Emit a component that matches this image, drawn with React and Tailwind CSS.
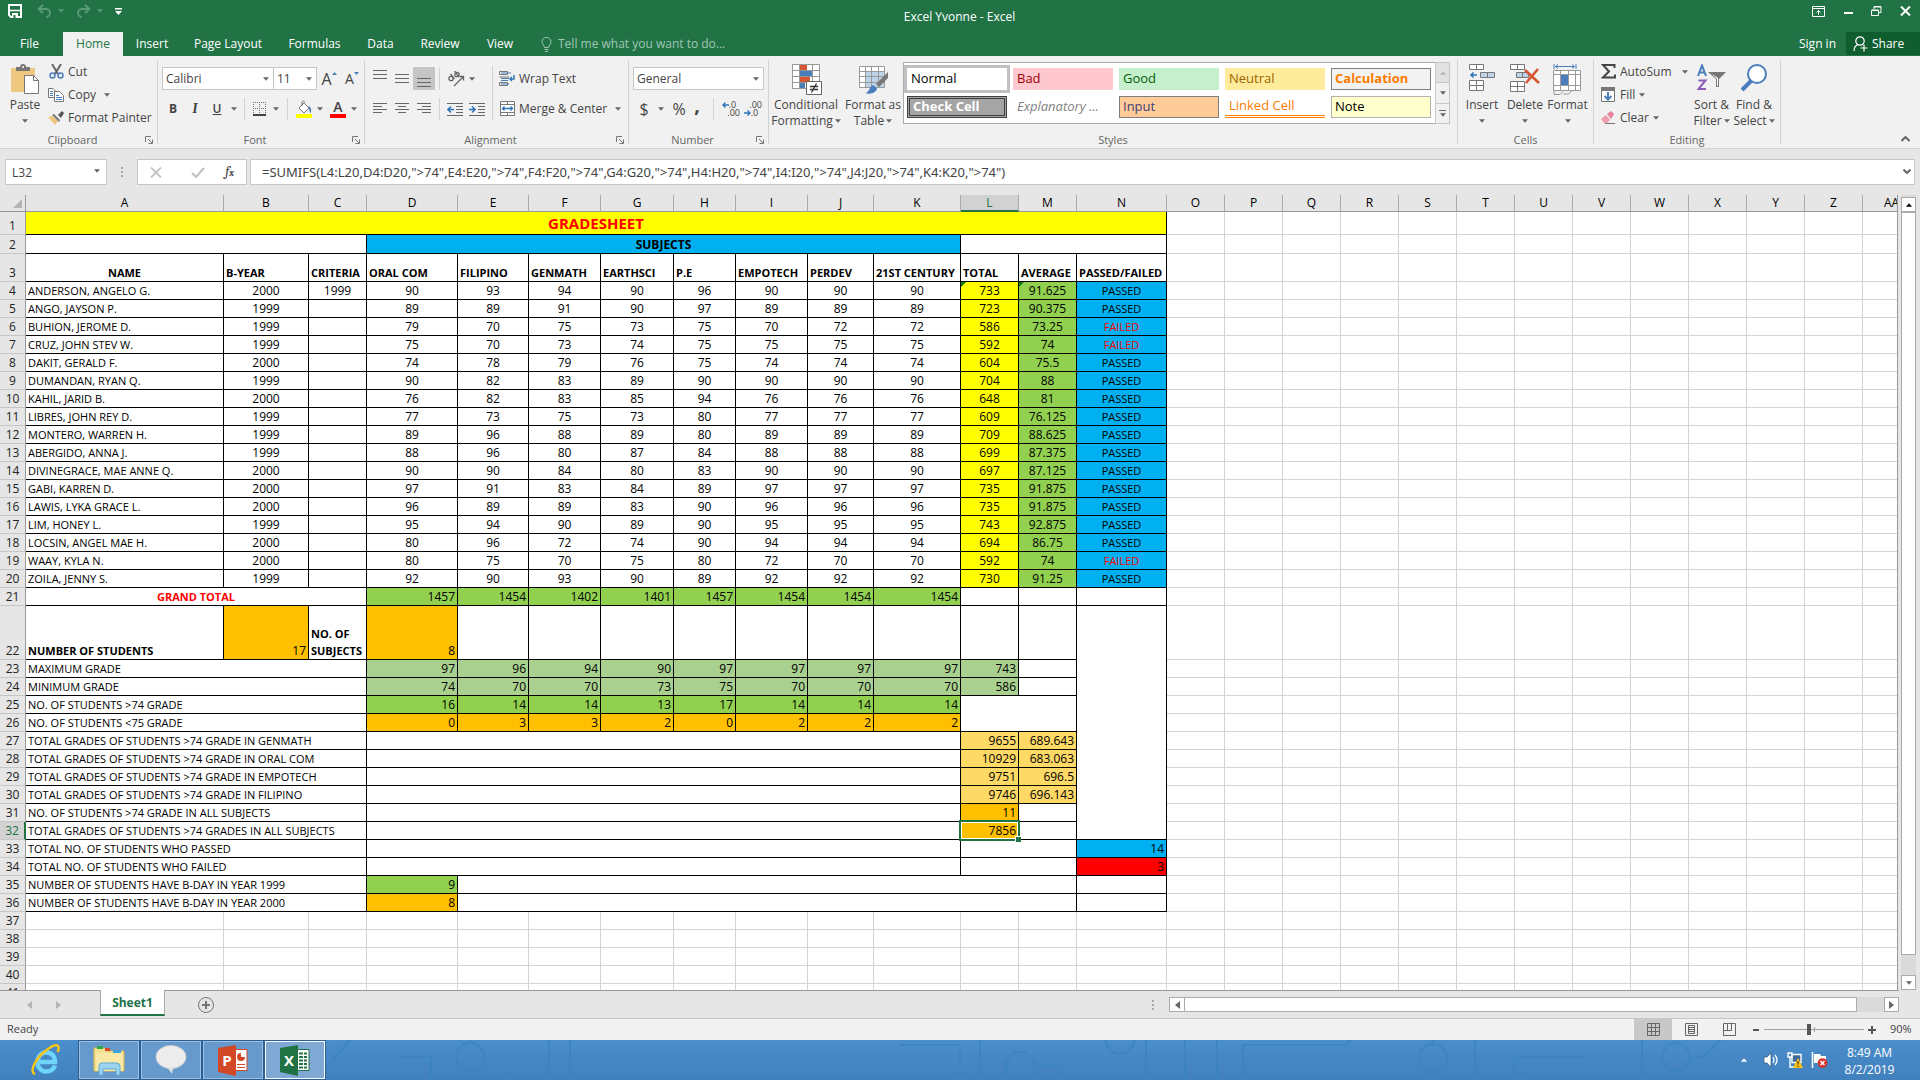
import React from 'react';
import clsx from 'clsx';

const YELLOW = 'bg-[#ffff00]';
const BLUE = 'bg-[#00b0f0]';
const GREEN = 'bg-[#92d050]';
const SAGE = 'bg-[#a9d08e]';
const ORANGE = 'bg-[#ffc000]';
const SAND = 'bg-[#ffd966]';

const columns = [
    ['A', 198], ['B', 85], ['C', 58], ['D', 91], ['E', 71], ['F', 72], ['G', 73], ['H', 62], ['I', 72], ['J', 66],
    ['K', 87], ['L', 58], ['M', 58], ['N', 90], ['O', 58], ['P', 58], ['Q', 58], ['R', 58], ['S', 58], ['T', 58],
    ['U', 58], ['V', 58], ['W', 58], ['X', 58], ['Y', 58], ['Z', 58], ['AA', 58],
];

const students = [
    ['ANDERSON, ANGELO G.', 2000, 1999, 90, 93, 94, 90, 96, 90, 90, 90, 733, 91.625, 'PASSED'],
    ['ANGO, JAYSON P.', 1999, '', 89, 89, 91, 90, 97, 89, 89, 89, 723, 90.375, 'PASSED'],
    ['BUHION, JEROME D.', 1999, '', 79, 70, 75, 73, 75, 70, 72, 72, 586, 73.25, 'FAILED'],
    ['CRUZ, JOHN STEV W.', 1999, '', 75, 70, 73, 74, 75, 75, 75, 75, 592, 74, 'FAILED'],
    ['DAKIT, GERALD F.', 2000, '', 74, 78, 79, 76, 75, 74, 74, 74, 604, 75.5, 'PASSED'],
    ['DUMANDAN, RYAN Q.', 1999, '', 90, 82, 83, 89, 90, 90, 90, 90, 704, 88, 'PASSED'],
    ['KAHIL, JARID B.', 2000, '', 76, 82, 83, 85, 94, 76, 76, 76, 648, 81, 'PASSED'],
    ['LIBRES, JOHN REY D.', 1999, '', 77, 73, 75, 73, 80, 77, 77, 77, 609, 76.125, 'PASSED'],
    ['MONTERO, WARREN H.', 1999, '', 89, 96, 88, 89, 80, 89, 89, 89, 709, 88.625, 'PASSED'],
    ['ABERGIDO, ANNA J.', 1999, '', 88, 96, 80, 87, 84, 88, 88, 88, 699, 87.375, 'PASSED'],
    ['DIVINEGRACE, MAE ANNE Q.', 2000, '', 90, 90, 84, 80, 83, 90, 90, 90, 697, 87.125, 'PASSED'],
    ['GABI, KARREN D.', 2000, '', 97, 91, 83, 84, 89, 97, 97, 97, 735, 91.875, 'PASSED'],
    ['LAWIS, LYKA GRACE L.', 2000, '', 96, 89, 89, 83, 90, 96, 96, 96, 735, 91.875, 'PASSED'],
    ['LIM, HONEY L.', 1999, '', 95, 94, 90, 89, 90, 95, 95, 95, 743, 92.875, 'PASSED'],
    ['LOCSIN, ANGEL MAE H.', 2000, '', 80, 96, 72, 74, 90, 94, 94, 94, 694, 86.75, 'PASSED'],
    ['WAAY, KYLA N.', 2000, '', 80, 75, 70, 75, 80, 72, 70, 70, 592, 74, 'FAILED'],
    ['ZOILA, JENNY S.', 1999, '', 92, 90, 93, 90, 89, 92, 92, 92, 730, 91.25, 'PASSED'],
];

const label = (t, span = 1, cls = '') => ({ t, span, cls: `text-left text-[11px] ${cls}` });
const head = (t, cls = 'text-left') => ({ t, cls: `text-[11px] font-bold ${cls}` });
const num = (t, cls = '') => ({ t, cls: `text-right text-xs ${cls}` });
const mid = (t, cls = '') => ({ t, cls: `text-center text-xs ${cls}` });
const blank = (span = 1, rows = 1) => ({ t: '', span, rows, cls: '' });
const nums = (list, cls) => list.map((t) => num(t, cls));
const blanks = (n) => Array.from({ length: n }, () => blank());

const sheetRows = [
    { h: 23, cells: [{ t: 'GRADESHEET', span: 14, cls: `text-center align-middle text-[15px] font-bold text-[#ff0000] ${YELLOW}` }] },
    { h: 19, cells: [blank(3), { t: 'SUBJECTS', span: 8, cls: `text-center text-xs font-bold ${BLUE}` }, blank(3)] },
    {
        h: 28,
        cells: [
            head('NAME', 'text-center'),
            ...['B-YEAR', 'CRITERIA', 'ORAL COM', 'FILIPINO', 'GENMATH', 'EARTHSCI', 'P.E', 'EMPOTECH', 'PERDEV', '21ST CENTURY', 'TOTAL', 'AVERAGE', 'PASSED/FAILED'].map((t) => head(t)),
        ],
    },
    ...students.map((s, r) => ({
        h: 18,
        cells: s.map((v, i) => {
            if (i === 0) return label(v);
            if (i === 11) return { ...mid(v, YELLOW), flag: r === 0 };
            if (i === 12) return { ...mid(v, GREEN), flag: r === 0 };
            if (i === 13) return { t: v, cls: clsx('text-center text-[11px]', BLUE, v === 'FAILED' && 'text-[#ff0000]') };
            return mid(v);
        }),
    })),
    { h: 18, cells: [{ t: 'GRAND TOTAL', span: 3, cls: 'text-center text-[11px] font-bold text-[#ff0000]' }, ...nums([1457, 1454, 1402, 1401, 1457, 1454, 1454, 1454], GREEN), ...blanks(3)] },
    { h: 54, cells: [head('NUMBER OF STUDENTS'), num(17, ORANGE), { t: 'NO. OF SUBJECTS', cls: 'text-left text-[11px] font-bold whitespace-normal' }, num(8, ORANGE), ...blanks(9), blank(1, 11)] },
    { h: 18, cells: [label('MAXIMUM GRADE', 3), ...nums([97, 96, 94, 90, 97, 97, 97, 97, 743], SAGE), blank()] },
    { h: 18, cells: [label('MINIMUM GRADE', 3), ...nums([74, 70, 70, 73, 75, 70, 70, 70, 586], SAGE), blank()] },
    { h: 18, cells: [label('NO. OF STUDENTS >74 GRADE', 3), ...nums([16, 14, 14, 13, 17, 14, 14, 14], GREEN), blank(2, 2)] },
    { h: 18, cells: [label('NO. OF STUDENTS <75 GRADE', 3), ...nums([0, 3, 3, 2, 0, 2, 2, 2], ORANGE)] },
    { h: 18, cells: [label('TOTAL GRADES OF STUDENTS >74 GRADE IN GENMATH', 3), blank(8), num(9655, SAND), num(689.643, SAND)] },
    { h: 18, cells: [label('TOTAL GRADES OF STUDENTS >74 GRADE IN ORAL COM', 3), blank(8), num(10929, SAND), num(683.063, SAND)] },
    { h: 18, cells: [label('TOTAL GRADES OF STUDENTS >74 GRADE IN EMPOTECH', 3), blank(8), num(9751, SAND), num(696.5, SAND)] },
    { h: 18, cells: [label('TOTAL GRADES OF STUDENTS >74 GRADE IN FILIPINO', 3), blank(8), num(9746, SAND), num(696.143, SAND)] },
    { h: 18, cells: [label('NO. OF STUDENTS >74 GRADE IN ALL SUBJECTS', 3), blank(8), num(11, ORANGE), blank()] },
    { h: 18, cells: [label('TOTAL GRADES OF STUDENTS >74 GRADES IN ALL SUBJECTS', 3), blank(8), { ...num(7856, ORANGE), selected: true }, blank()] },
    { h: 18, cells: [label('TOTAL NO. OF STUDENTS WHO PASSED', 3), blank(8), blank(2), num(14, BLUE)] },
    { h: 18, cells: [label('TOTAL NO. OF STUDENTS WHO FAILED', 3), blank(8), blank(2), num(3, 'bg-[#ff0000]')] },
    { h: 18, cells: [label('NUMBER OF STUDENTS HAVE B-DAY IN YEAR 1999', 3), num(9, GREEN), blank(9), blank()] },
    { h: 18, cells: [label('NUMBER OF STUDENTS HAVE B-DAY IN YEAR 2000', 3), num(8, ORANGE), blank(9), blank()] },
    ...Array.from({ length: 5 }, () => ({ h: 18, cells: [] })),
];

const Caret = ({ className = 'text-[#666]' }) => (
    <svg width="6" height="4" viewBox="0 0 7 4" className={clsx('shrink-0', className)} fill="currentColor">
        <path d="M0 0h7L3.500 4z" />
    </svg>
);

const Svg = ({ w, h = w, children, ...rest }) => (
    <svg width={w} height={h} viewBox={`0 0 ${w} ${h}`} fill="none" className="shrink-0" {...rest}>
        {children}
    </svg>
);

const IconButton = ({ name, className, children }) => (
    <button aria-label={name} className={clsx('flex h-full shrink-0 items-center justify-center', className)}>
        {children}
    </button>
);

/* ---------- title bar ---------- */

const TitleBar = () => (
    <div className="flex h-8 items-start justify-between text-white">
        <div className="flex h-[22px] flex-1 items-center pl-2">
            <button aria-label="Save">
                <Svg w={14}>
                    <path d="M1 1h12v12H3l-2-2z" stroke="#fff" strokeWidth="2" />
                    <path d="M1 6.500h12" stroke="#fff" strokeWidth="1.500" />
                    <path d="M4 9h6v5H4z" fill="#fff" />
                    <path d="M5.500 11h2v3h-2z" fill="#217346" />
                </Svg>
            </button>
            <button aria-label="Undo" className="ml-[15px] flex items-center gap-1.5 text-[#5a9877]">
                <Svg w={15} h={14}>
                    <path d="M6 1L1.500 5 6 9M2 5h7a4 4 0 0 1 0 8" stroke="currentColor" strokeWidth="2" />
                </Svg>
                <Caret className="text-[#5a9877]" />
            </button>
            <button aria-label="Redo" className="ml-3 flex items-center gap-1.5 text-[#5a9877]">
                <Svg w={15} h={14}>
                    <path d="M9 1l4.500 4L9 9M13 5H6a4 4 0 0 0 0 8" stroke="currentColor" strokeWidth="2" />
                </Svg>
                <Caret className="text-[#5a9877]" />
            </button>
            <button aria-label="Customize" className="ml-3">
                <Svg w={7} h={7}>
                    <path d="M0 0h7v1.500H0zM0 3h7L3.500 7z" fill="#fff" />
                </Svg>
            </button>
        </div>
        <h1 className="pt-2 text-xs leading-[18px]">Excel Yvonne - Excel</h1>
        <div className="flex h-[22px] flex-1 items-center justify-end gap-[18px] pr-[9px]">
            <button aria-label="Ribbon options">
                <Svg w={13} h={11} stroke="#fff">
                    <path d="M.5.5h12v10H.5zM.5 2.500h12M6.500 9V4.500M4.500 6.500l2-2 2 2" />
                </Svg>
            </button>
            <button aria-label="Minimize">
                <Svg w={10} h={10}>
                    <path d="M1 6h9v2H1z" fill="#fff" />
                </Svg>
            </button>
            <button aria-label="Restore">
                <Svg w={11} h={10} stroke="#fff">
                    <path d="M.5 4.500h7v5h-7zM.5 4h7M3 3V.5h7v6H8M3 1h7" />
                </Svg>
            </button>
            <button aria-label="Close">
                <Svg w={11} h={10} stroke="#fff" strokeWidth="2">
                    <path d="M1 .5l9 9M10 .5l-9 9" />
                </Svg>
            </button>
        </div>
    </div>
);

const tabs = [
    ['Insert', 'w-[58px]'],
    ['Page Layout', 'w-[94px]'],
    ['Formulas', 'w-[79px]'],
    ['Data', 'w-[53px]'],
    ['Review', 'w-[66px]'],
    ['View', 'w-[54px]'],
];

const TabBar = () => (
    <nav className="flex h-6 items-stretch text-xs whitespace-nowrap text-white">
        <button className="w-[63px] pr-1">File</button>
        <button className="w-[60px] bg-[#f1f1f1] text-[#217346]">Home</button>
        {tabs.map(([t, w]) => (
            <button key={t} className={w}>{t}</button>
        ))}
        <button className="ml-3.5 flex items-center gap-1.5 text-[#a0c7b1]">
            <Svg w={11} h={15} stroke="currentColor">
                <path d="M3.500 10.500C3.500 8.500 1 7.500 1 4.500a4.500 4 0 0 1 9 0c0 3-2.500 4-2.500 6zM3.500 12.500h4M4 14.500h3" />
            </Svg>
            Tell me what you want to do...
        </button>
        <div className="flex-1" />
        <button className="px-2.5">Sign in</button>
        <button className="mb-px flex w-[74px] items-center gap-1 bg-[#105d30] pl-[7px]">
            <Svg w={15} h={16} stroke="#fff" strokeWidth="1.200">
                <circle cx="7" cy="5" r="4.200" />
                <path d="M1 15c0-4 2-6 4.500-6.500M11 8.500v7M7.500 12h7" />
            </Svg>
            Share
        </button>
    </nav>
);

/* ---------- ribbon ---------- */

const Group = ({ title, launcher, className, children }) => (
    <>
        <section aria-label={title} className={clsx('flex shrink-0 flex-col pt-1', className)}>
            <div className="flex min-h-0 flex-1">{children}</div>
            <div className="flex h-4 items-center text-[11px] text-[#666]">
                <span className="flex-1 text-center">{title}</span>
                {launcher && (
                    <button aria-label={`${title} settings`} className="flex w-3">
                        <Svg w={8} stroke="#777">
                            <path d="M.5 6V.5H6M3 3l4 4M7.500 3.500v4h-4" />
                        </Svg>
                    </button>
                )}
            </div>
        </section>
        <div className="my-1 w-px shrink-0 bg-[#d2d2d2]" />
    </>
);

const Bar = ({ className = 'h-[22px]' }) => <div className={clsx('w-px shrink-0 bg-[#d2d2d2]', className)} />;

const Combo = ({ name, value, className }) => (
    <div className={clsx('relative shrink-0', className)}>
        <select aria-label={name} className="h-[23px] w-full appearance-none border border-[#c6c6c6] bg-white pl-[3px]">
            <option>{value}</option>
        </select>
        <span className="pointer-events-none absolute top-2.5 right-[5px]">
            <Caret />
        </span>
    </div>
);

const BigButton = ({ icon, lines, className }) => (
    <button className={clsx('flex shrink-0 flex-col items-center pt-1 leading-4', className)}>
        <span className="flex h-[33px] items-start">{icon}</span>
        {lines.map((l, i) => (
            <span key={l} className="flex items-center gap-0.5 whitespace-nowrap">
                {l}
                {i === lines.length - 1 && i > 0 && <Caret />}
            </span>
        ))}
        {lines.length === 1 && <span className="flex h-4 items-center"><Caret /></span>}
    </button>
);

const SmallButton = ({ icon, text, caret }) => (
    <button className="flex h-[23px] items-center gap-1 whitespace-nowrap">
        <span className="flex w-4 justify-center">{icon}</span>
        {text}
        {caret && <Caret />}
    </button>
);

const Clipboard = () => (
    <Group title="Clipboard" launcher className="w-[157px]">
        <BigButton
            className="w-12 pl-0.5"
            lines={['Paste']}
            icon={
                <Svg w={30} h={31}>
                    <path d="M1 4h24v24H1z" fill="#edc87e" />
                    <path d="M6 7V3h4a3 3 0 0 1 6 0h4v4z" fill="#777" />
                    <circle cx="13" cy="3" r="1" fill="#fff" />
                    <path d="M14.500 11.500h9l5 5v13h-14z" fill="#fff" stroke="#777" />
                    <path d="M23.500 11.500v5h5" stroke="#777" />
                </Svg>
            }
        />
        <div>
            <SmallButton
                text="Cut"
                icon={
                    <Svg w={15}>
                        <path d="M3 0l6 10M12 0L6 10" stroke="#666" strokeWidth="2" />
                        <circle cx="3.500" cy="11.500" r="2.500" stroke="#4a7ebb" strokeWidth="1.500" />
                        <circle cx="11.500" cy="11.500" r="2.500" stroke="#4a7ebb" strokeWidth="1.500" />
                    </Svg>
                }
            />
            <SmallButton
                text={<span className="mr-1">Copy</span>}
                caret
                icon={
                    <Svg w={16} h={14} stroke="#777">
                        <path d="M6.500 9.500h-6V.5H5l3 3" fill="#fff" />
                        <path d="M2 3.500h3M2 5.500h3M2 7.500h3" stroke="#4a7ebb" />
                        <path d="M6.500 3.500h5l4 4v6h-9z" fill="#fff" />
                        <path d="M8 7.500h3M8 9.500h6M8 11.500h6" stroke="#4a7ebb" />
                    </Svg>
                }
            />
            <SmallButton
                text="Format Painter"
                icon={
                    <Svg w={16} h={14}>
                        <path d="M0 6l4-1 6 5-3 4z" fill="#edc87e" />
                        <path d="M4 4l2-1 6 6-1 2z" fill="#777" />
                        <path d="M10 4l4-4 2 2-3 5z" fill="#555" />
                    </Svg>
                }
            />
        </div>
    </Group>
);

const FontGroup = () => (
    <Group title="Font" launcher className="w-[206px]">
        <div className="flex flex-col gap-[7px] pt-[7px] pl-1">
            <div className="flex h-[23px]">
                <Combo name="Font" value="Calibri" className="w-28" />
                <Combo name="Size" value="11" className="-ml-px w-11" />
                <IconButton name="Grow font" className="w-6">
                    <span className="text-base leading-none">A</span>
                    <Svg w={5} h={14}><path d="M0 3h5L2.500 0z" fill="#4a7ebb" /></Svg>
                </IconButton>
                <IconButton name="Shrink font" className="w-[22px]">
                    <span className="text-sm leading-none">A</span>
                    <Svg w={5} h={14}><path d="M0 0h5L2.500 3z" fill="#4a7ebb" /></Svg>
                </IconButton>
            </div>
            <div className="flex h-6 items-center">
                <IconButton name="Bold" className="w-[22px] font-bold">B</IconButton>
                <IconButton name="Italic" className="w-[22px] font-serif text-sm font-bold italic">I</IconButton>
                <IconButton name="Underline" className="w-[22px] font-semibold underline">U</IconButton>
                <IconButton name="Underline style" className="mr-1 w-3"><Caret /></IconButton>
                <Bar />
                <IconButton name="Borders" className="ml-0.5 w-6">
                    <Svg w={13} h={14} stroke="#777">
                        <path d="M.5 0v12M6.500 0v12M12.500 0v12M0 .5h13M0 6.500h13" strokeDasharray="1 1" />
                        <path d="M0 13h13" stroke="#444" strokeWidth="2" />
                    </Svg>
                </IconButton>
                <IconButton name="Border style" className="mr-1.5 w-2.5"><Caret /></IconButton>
                <Bar />
                <IconButton name="Fill color" className="ml-1 w-6">
                    <Svg w={17} h={18}>
                        <path d="M8 3l5 5-5 5-5-5z" fill="#fff" stroke="#777" />
                        <path d="M6 6V2a2 2 0 0 1 3 0" stroke="#777" />
                        <path d="M12 6q4 1 3 7-2-1-2-5z" fill="#4a7ebb" />
                        <path d="M0 14h16v4H0z" fill="#ffff00" />
                    </Svg>
                </IconButton>
                <IconButton name="Fill colors" className="w-2"><Caret /></IconButton>
                <IconButton name="Font color" className="ml-0.5 w-6 flex-col">
                    <span className="text-sm leading-[14px] font-semibold">A</span>
                    <span className="h-1 w-4 bg-[#ff0000]" />
                </IconButton>
                <IconButton name="Font colors" className="w-2"><Caret /></IconButton>
            </div>
        </div>
    </Group>
);

const Lines = ({ d }) => (
    <Svg w={14} h={16} stroke="#666">
        <path d={d} />
    </Svg>
);

const Alignment = () => (
    <Group title="Alignment" launcher className="w-[263px]">
        <div className="flex w-[127px] flex-col gap-[7px] pt-[7px] pl-1">
            <div className="flex h-[23px] items-center">
                <IconButton name="Top align" className="w-[22px] pb-2"><Lines d="M0 3.500h14M0 7.500h14M0 11.500h14" /></IconButton>
                <IconButton name="Middle align" className="w-[22px]"><Lines d="M0 3.500h14M0 7.500h14M0 11.500h14" /></IconButton>
                <IconButton name="Bottom align" className="mr-1 w-[22px] bg-[#c5c5c5] pt-2"><Lines d="M0 3.500h14M0 7.500h14M0 11.500h14" /></IconButton>
                <Bar />
                <IconButton name="Orientation" className="ml-1 w-6">
                    <Svg w={17} h={16} stroke="#666" strokeWidth="1.300">
                        <circle cx="3" cy="7.500" r="2.200" />
                        <path d="M2.500 3l4 5M6.500 0l4.500 6" />
                        <circle cx="9" cy="3.500" r="2.200" />
                        <path d="M6 15L15.500 5.500M11.500 5.500h4v4" />
                    </Svg>
                </IconButton>
                <IconButton name="Orientation options" className="w-2"><Caret /></IconButton>
            </div>
            <div className="flex h-6 items-center">
                <IconButton name="Align left" className="w-[22px]"><Lines d="M0 2.500h14M0 5.500h9M0 8.500h14M0 11.500h9" /></IconButton>
                <IconButton name="Center" className="w-[22px]"><Lines d="M0 2.500h14M3 5.500h8M0 8.500h14M3 11.500h8" /></IconButton>
                <IconButton name="Align right" className="mr-1 w-[22px]"><Lines d="M0 2.500h14M5 5.500h9M0 8.500h14M5 11.500h9" /></IconButton>
                <Bar />
                <IconButton name="Decrease indent" className="ml-1 w-[22px]">
                    <Svg w={16} h={13} stroke="#666">
                        <path d="M0 .5h16M9 3.500h7M9 6.500h7M9 9.500h7M0 12.500h16" />
                        <path d="M7 6.500H1M4 3.500l-3 3 3 3" stroke="#2e75b6" strokeWidth="1.600" />
                    </Svg>
                </IconButton>
                <IconButton name="Increase indent" className="w-[22px]">
                    <Svg w={16} h={13} stroke="#666">
                        <path d="M0 .5h16M9 3.500h7M9 6.500h7M9 9.500h7M0 12.500h16" />
                        <path d="M0 6.500h6M3 3.500l3 3-3 3" stroke="#2e75b6" strokeWidth="1.600" />
                    </Svg>
                </IconButton>
            </div>
        </div>
        <Bar className="mt-1.5 h-[54px]" />
        <div className="flex flex-col gap-[7px] pt-[7px] pl-1.5">
            <SmallButton
                text="Wrap Text"
                icon={
                    <Svg w={16} h={15} stroke="#777">
                        <path d="M.5.5h8v3h-8zM.5 11.500h8v3h-8zM.5 6h10" />
                        <path d="M2 2h10M2 7.500h8M2 9.500h7M2 13h8" stroke="#4a7ebb" />
                        <path d="M15 4v4h-4M13 6l-2 2 2 2" stroke="#2e75b6" strokeWidth="1.400" />
                    </Svg>
                }
            />
            <SmallButton
                text={<span className="mr-1">Merge &amp; Center</span>}
                caret
                icon={
                    <Svg w={15} h={15} stroke="#777">
                        <path d="M.5.5h14v14H.5zM.5 3.500h14M.5 11.500h14M7.500 .5v3M7.500 11.500v3" fill="#fff" />
                        <path d="M2 7.500h11M4.500 5.500l-2 2 2 2M10.500 5.500l2 2-2 2" stroke="#2e75b6" strokeWidth="1.300" />
                    </Svg>
                }
            />
        </div>
    </Group>
);

const NumberGroup = () => (
    <Group title="Number" launcher className="w-[139px]">
        <div className="flex w-full flex-col gap-[7px] px-1 pt-[7px]">
            <Combo name="Number format" value="General" className="w-full" />
            <div className="flex h-6 items-center">
                <IconButton name="Currency" className="w-[22px] text-base">$</IconButton>
                <IconButton name="Currency options" className="w-3"><Caret /></IconButton>
                <IconButton name="Percent style" className="w-6 text-base">%</IconButton>
                <IconButton name="Comma style" className="mr-2.5 w-3 pb-2 text-xl font-bold">,</IconButton>
                <Bar />
                <IconButton name="Increase decimal" className="ml-1 w-[22px] flex-col text-[9px] leading-[8px]">
                    <span className="flex items-center">
                        <Svg w={7} h={6} stroke="#2e75b6" strokeWidth="1.400"><path d="M7 3H1M3.500.5L1 3l2.500 2.500" /></Svg>.0
                    </span>
                    <span className="self-end">.00</span>
                </IconButton>
                <IconButton name="Decrease decimal" className="w-[22px] flex-col text-[9px] leading-[8px]">
                    <span className="self-end">.00</span>
                    <span className="flex items-center">
                        <Svg w={7} h={6} stroke="#2e75b6" strokeWidth="1.400"><path d="M0 3h6M3.500.5L6 3 3.500 5.500" /></Svg>.0
                    </span>
                </IconButton>
            </div>
        </div>
    </Group>
);

const cellStyles = [
    ['Normal', 'bg-white text-black outline-3 outline-[#c0c0c0]'],
    ['Bad', 'bg-[#ffc7ce] text-[#9c0006]'],
    ['Good', 'bg-[#c6efce] text-[#006100]'],
    ['Neutral', 'bg-[#ffeb9c] text-[#9c6500]'],
    ['Calculation', 'border border-[#7f7f7f] bg-[#f2f2f2] font-bold text-[#fa7d00]'],
    ['Check Cell', 'border-3 border-double border-[#3f3f3f] bg-[#a5a5a5] font-bold text-white'],
    ['Explanatory ...', 'italic text-[#7f7f7f]'],
    ['Input', 'border border-[#7f7f7f] bg-[#ffcc99] text-[#3f3f76]'],
    ['Linked Cell', 'border-b-3 border-double border-[#ff8001] text-[#fa7d00]'],
    ['Note', 'border border-[#b2b2b2] bg-[#ffffcc] text-black'],
];

const Styles = () => (
    <Group title="Styles" className="w-[688px]">
        <BigButton
            className="w-[74px]"
            lines={['Conditional', 'Formatting']}
            icon={
                <Svg w={31} h={31} stroke="#999">
                    <path d="M1.500.5h27v24h-27z" fill="#fff" />
                    <path d="M9 1h7v5H9zM9 13h10v5H9z" fill="#d65532" stroke="none" />
                    <path d="M9 7h12v5H9zM9 19h5v5H9z" fill="#4a7ebb" stroke="none" />
                    <path d="M1 6.500h28M1 12.500h28M1 18.500h28M8.500 0v25M21.500 0v25" />
                    <path d="M15.500 17.500h15v13h-15z" fill="#fff" stroke="#666" />
                    <path d="M19 22.500h8M19 25.500h8M25.500 19.500l-5 9" stroke="#333" strokeWidth="1.300" />
                </Svg>
            }
        />
        <BigButton
            className="w-[60px]"
            lines={['Format as', 'Table']}
            icon={
                <Svg w={31} h={31} stroke="#999">
                    <path d="M1.500 2.500h25v21h-25z" fill="#fff" />
                    <path d="M8 8h18v15H8z" fill="#bdd3ea" stroke="none" />
                    <path d="M1 7.500h26M1 12.500h26M1 18.500h26M7.500 2v22M13.500 2v22M20.500 2v22" />
                    <path d="M30 8v6l-9 9-3-3z" fill="#777" stroke="none" />
                    <path d="M7 29c4 0 4-6 8-8l4 3c0 4-6 7-12 5z" fill="#4a7ebb" stroke="none" />
                </Svg>
            }
        />
        <div className="mt-0.5 flex h-[62px] border border-[#ababab] bg-white">
            <div className="grid grid-cols-5 gap-1.5 py-[5px] pr-1 pl-[3px]">
                {cellStyles.map(([t, cls]) => (
                    <button key={t} className={clsx('flex h-[22px] w-[100px] items-center text-left text-[13px] whitespace-nowrap', /border/.test(cls) && !/border-b/.test(cls) ? 'pl-[3px]' : 'pl-1', cls)}>
                        {t}
                    </button>
                ))}
            </div>
            <div className="-my-px -mr-px flex w-[15px] flex-col divide-y divide-[#c6c6c6] border border-[#c6c6c6] bg-[#f1f1f1]">
                <button aria-label="Previous styles" className="flex flex-1 items-center justify-center bg-[#e1e1e1]">
                    <Caret className="rotate-180 text-[#b5b5b5]" />
                </button>
                <button aria-label="Next styles" className="flex flex-1 items-center justify-center"><Caret /></button>
                <button aria-label="More styles" className="flex flex-1 flex-col items-center justify-center gap-0.5">
                    <span className="h-px w-[7px] bg-[#666]" />
                    <Caret />
                </button>
            </div>
        </div>
    </Group>
);

const Cells = () => (
    <Group title="Cells" className="w-[135px]">
        <BigButton
            className="ml-1 w-10"
            lines={['Insert']}
            icon={
                <Svg w={27} h={28} stroke="#777">
                    <path d="M.5.5h14v5H.5zM7.500.5v5M.5 16.500h14v10H.5zM7.500 16.500v10M.5 21.500h14" fill="#fff" />
                    <path d="M11.500 8.500h14v5h-14zM18.500 8.500v5" fill="#bdd3ea" />
                    <path d="M8 11H2M4.500 8.500L2 11l2.500 2.500" stroke="#2e75b6" strokeWidth="1.600" />
                </Svg>
            }
        />
        <BigButton
            className="ml-0.5 w-[42px]"
            lines={['Delete']}
            icon={
                <Svg w={30} h={28} stroke="#777">
                    <path d="M.5.5h14v5H.5zM7.500.5v5M.5 17.500h14v10H.5zM7.500 17.500v10M.5 22.500h14" fill="#fff" />
                    <path d="M6.500 8.500h12v5h-12zM12.500 8.500v5" fill="#bdd3ea" />
                    <path d="M15 6l14 13M28 5L16 19" stroke="#d65532" strokeWidth="2.600" />
                </Svg>
            }
        />
        <BigButton
            className="w-[43px]"
            lines={['Format']}
            icon={
                <Svg w={29} h={31} stroke="#999">
                    <path d="M1 0v5M23 0v5M2 2.500h20M5 .5l-2.500 2L5 4.500M19 .5l2.500 2-2.500 2" stroke="#4a7ebb" />
                    <path d="M.5 6.500h27v20H.5z" fill="#fff" />
                    <path d="M.5 10.500h27M.5 21.500h27M7.500 6.500v20M15.500 6.500v20M22.500 6.500v20" />
                    <path d="M8 11h7v10H8z" fill="#4a7ebb" stroke="none" />
                    <path d="M1 26.500v4h6l3-3M10.500 30h5l3-3" />
                </Svg>
            }
        />
    </Group>
);

const Editing = () => (
    <Group title="Editing" className="w-[186px]">
        <div className="w-[97px] pl-1.5">
            <SmallButton
                text={<span className="mr-1.5">AutoSum</span>}
                caret
                icon={
                    <Svg w={15}>
                        <path d="M13.500 4V1H2l6 6.500L2 13.500h12v-3" stroke="#444" strokeWidth="2" />
                    </Svg>
                }
            />
            <SmallButton
                text="Fill"
                caret
                icon={
                    <Svg w={14} h={15}>
                        <path d="M.5.5h13v14H.5z" fill="#fff" stroke="#777" />
                        <path d="M0 0h14v4H0z" fill="#777" />
                        <path d="M7 5v7M3.500 9L7 12.500 10.500 9" stroke="#4a7ebb" strokeWidth="2" />
                    </Svg>
                }
            />
            <SmallButton
                text="Clear"
                caret
                icon={
                    <Svg w={14} h={13}>
                        <path d="M6 3l4-3 3 3-3 5z" fill="#e8839a" />
                        <path d="M0 8l5-4 4 5-3 3H3z" fill="#ef9fb0" />
                        <path d="M4 12.500h10" stroke="#777" />
                    </Svg>
                }
            />
        </div>
        <BigButton
            className="w-[41px]"
            lines={['Sort &', 'Filter']}
            icon={
                <Svg w={30} h={31}>
                    <path d="M1 12L5 1.500 9 12M2.500 8.500h5" stroke="#4a7ebb" strokeWidth="2" />
                    <path d="M1.500 16.500h7l-7 8.500h7.500" stroke="#8e5bb5" strokeWidth="2" />
                    <path d="M11 8h18l-7 7v8h-3v-8z" fill="#777" />
                    <path d="M15 10l5 5v7h1v-8z" fill="#fff" />
                </Svg>
            }
        />
        <BigButton
            className="w-11"
            lines={['Find &', 'Select']}
            icon={
                <Svg w={28} h={28} stroke="#4a7ebb">
                    <path d="M2 26l9-9" strokeWidth="4" />
                    <circle cx="17" cy="10" r="9" fill="#fff" strokeWidth="2" />
                </Svg>
            }
        />
    </Group>
);

const Ribbon = () => (
    <div className="flex h-[93px] shrink-0 border-b border-[#d2d2d2] bg-[#f1f1f1] text-xs text-[#444]">
        <Clipboard />
        <FontGroup />
        <Alignment />
        <NumberGroup />
        <Styles />
        <Cells />
        <Editing />
        <div className="flex flex-1 items-end justify-end pr-2.5 pb-1.5">
            <button aria-label="Collapse ribbon">
                <Svg w={9} h={6} stroke="#666" strokeWidth="2"><path d="M.5 5l4-4 4 4" /></Svg>
            </button>
        </div>
    </div>
);

const FormulaBar = () => (
    <div className="flex h-[46px] shrink-0 items-center pr-[5px] pl-[5px] text-xs text-[#444]">
        <div className="relative w-[102px]">
            <input aria-label="Name box" defaultValue="L32" className="h-[26px] w-full border border-[#c6c6c6] bg-white pl-1.5" />
            <span className="pointer-events-none absolute top-2.5 right-[7px]"><Caret /></span>
        </div>
        <div className="flex w-[30px] flex-col items-center gap-0.5">
            <i className="size-0.5 bg-[#aaa]" /><i className="size-0.5 bg-[#aaa]" /><i className="size-0.5 bg-[#aaa]" />
        </div>
        <div className="flex h-[26px] w-[110px] items-center justify-between border border-[#c6c6c6] bg-white px-3">
            <button aria-label="Cancel">
                <Svg w={12} h={11} stroke="#c3c3c3" strokeWidth="1.800"><path d="M1 .5l10 10M11 .5l-10 10" /></Svg>
            </button>
            <button aria-label="Enter" className="ml-2">
                <Svg w={14} h={11} stroke="#c3c3c3" strokeWidth="2.200"><path d="M1 6l4 4 8-9" /></Svg>
            </button>
            <button aria-label="Insert function" className="font-serif text-sm leading-none italic">
                f<span className="text-[10px] font-bold">x</span>
            </button>
        </div>
        <div className="relative ml-[3px] flex-1">
            <input
                aria-label="Formula"
                className="h-[26px] w-full border border-[#c6c6c6] bg-white pl-[11px] font-['Noto_Sans',sans-serif] text-[13px]"
                defaultValue={'=SUMIFS(L4:L20,D4:D20,">74",E4:E20,">74",F4:F20,">74",G4:G20,">74",H4:H20,">74",I4:I20,">74",J4:J20,">74",K4:K20,">74")'}
            />
            <span className="pointer-events-none absolute top-2.5 right-1">
                <Svg w={8} h={5} stroke="#666" strokeWidth="2"><path d="M.5.5L4 4 7.500.5" /></Svg>
            </span>
        </div>
    </div>
);

/* ---------- sheet ---------- */

const Cell = ({ cell }) => (
    <td
        colSpan={cell.span || 1}
        rowSpan={cell.rows || 1}
        className={clsx('border-r border-b border-black px-0.5 leading-[17px]', !/align-middle/.test(cell.cls) && 'align-bottom', (cell.flag || cell.selected) && 'relative', cell.cls)}
    >
        {cell.flag && <span className="absolute top-0 left-0 size-[5px] bg-[#107c10] [clip-path:polygon(0_0,100%_0,0_100%)]" />}
        {cell.selected && (
            <span className="absolute -inset-0.5 border-2 border-[#217346] shadow-[inset_0_0_0_1px_#fff]">
                <i className="absolute -right-[3px] -bottom-[3px] size-1.5 border-t border-l border-white bg-[#217346]" />
            </span>
        )}
        {cell.t}
    </td>
);

const EmptyCell = () => <td className="border-r border-b border-[#d4d4d4]" />;

const Sheet = () => (
    <table className="w-[1921px] table-fixed border-separate border-spacing-0 bg-white whitespace-nowrap text-black">
        <colgroup>
            <col className="w-[26px]" />
            {columns.map(([c, w]) => <col key={c} style={{ width: w }} />)}
        </colgroup>
        <thead>
            <tr className="h-[17px] bg-[#e6e6e6] text-xs leading-4 font-normal">
                <th className="border-r border-b border-[#999] p-0">
                    <Svg w={9} h={9} style={{ marginLeft: 'auto', marginRight: 3 }}><path d="M9 0v9H0z" fill="#b4b4b4" /></Svg>
                </th>
                {columns.map(([c]) => (
                    <th
                        key={c}
                        scope="col"
                        className={clsx('border-r border-r-[#ababab] p-0 font-normal', c === 'L' ? 'border-b-2 border-b-[#217346] bg-[#d2d2d2] leading-[15px] text-[#217346]' : 'border-b border-b-[#999]')}
                    >
                        {c}
                    </th>
                ))}
            </tr>
        </thead>
        <tbody>
            {sheetRows.map((row, i) => {
                const n = i + 1;
                return (
                    <tr key={n} style={{ height: row.h }}>
                        <th
                            scope="row"
                            className={clsx('border-b border-b-[#c6c6c6] p-0 align-bottom text-xs leading-[17px] font-normal', n === 32 ? 'border-r-2 border-r-[#217346] bg-[#d2d2d2] text-[#217346]' : 'border-r border-r-[#999] bg-[#e6e6e6] text-[#222]')}
                        >
                            {n}
                        </th>
                        {row.cells.map((c, k) => <Cell key={k} cell={c} />)}
                        {Array.from({ length: row.cells.length ? 13 : 27 }, (_, k) => <EmptyCell key={`e${k}`} />)}
                    </tr>
                );
            })}
        </tbody>
    </table>
);

const VerticalScroll = () => (
    <div className="ml-[3px] flex w-[15px] flex-col bg-[#dadada] pt-0.5">
        <button aria-label="Scroll up" className="flex h-[15px] shrink-0 items-center justify-center border border-[#ababab] bg-white">
            <Caret className="rotate-180" />
        </button>
        <div className="h-[743px] shrink border border-[#ababab] bg-white" />
        <div className="min-h-5 flex-1" />
        <button aria-label="Scroll down" className="flex h-[15px] shrink-0 items-center justify-center border border-[#ababab] bg-white">
            <Caret />
        </button>
    </div>
);

const Arrow = ({ left, className }) => (
    <Svg w={5} h={8}>
        <path d={left ? 'M5 0v8L0 4z' : 'M0 0v8l5-4z'} className={className} />
    </Svg>
);

const SheetTabs = () => (
    <div className="flex h-[29px] shrink-0 border-b border-[#c6c6c6] text-xs">
        <div className="mr-[21px] flex flex-1 border-t border-[#999]">
            <div className="flex w-[100px] items-center gap-6 pl-[27px]">
                <button aria-label="Previous sheet"><Arrow left className="fill-[#b5b5b5]" /></button>
                <button aria-label="Next sheet"><Arrow className="fill-[#b5b5b5]" /></button>
            </div>
            <button className="-mt-px h-[26px] w-[65px] border-x border-b-2 border-x-[#ababab] border-b-[#217346] bg-white pt-px font-bold text-[#217346]">
                Sheet1
            </button>
            <button aria-label="New sheet" className="ml-[33px]">
                <Svg w={16} stroke="#777">
                    <circle cx="8" cy="8" r="7.500" />
                    <path d="M8 4v8M4 8h8" strokeWidth="2" />
                </Svg>
            </button>
            <div className="flex-1" />
            <div className="mr-[15px] flex flex-col justify-center gap-0.5">
                <i className="size-0.5 bg-[#aaa]" /><i className="size-0.5 bg-[#aaa]" /><i className="size-0.5 bg-[#aaa]" />
            </div>
            <div className="mt-1.5 flex h-[15px] w-[730px] bg-[#dadada]">
                <button aria-label="Scroll left" className="flex w-4 items-center justify-center border border-[#ababab] bg-white">
                    <Arrow left className="fill-[#666]" />
                </button>
                <div className="-ml-px flex-1 border border-[#ababab] bg-white" />
                <div className="w-[27px]" />
                <button aria-label="Scroll right" className="flex w-[15px] items-center justify-center border border-[#ababab] bg-white">
                    <Arrow className="fill-[#666]" />
                </button>
            </div>
        </div>
    </div>
);

const StatusBar = () => (
    <div className="flex h-[21px] shrink-0 items-center bg-[#f1f1f1] pl-[7px] text-[11px] text-[#444]">
        Ready
        <div className="flex-1" />
        <IconButton name="Normal view" className="w-[38px] bg-[#c8c8c8]">
            <Svg w={13} stroke="#666"><path d="M.5.5h12v12H.5zM.5 4.500h12M.5 8.500h12M4.500.5v12M8.500.5v12" /></Svg>
        </IconButton>
        <IconButton name="Page layout view" className="w-[38px]">
            <Svg w={13} stroke="#666"><path d="M.5.5h12v12H.5zM3.500 2.500h6v8h-6zM4 4.500h5M4 6.500h5M4 8.500h5" /></Svg>
        </IconButton>
        <IconButton name="Page break view" className="w-[38px]">
            <Svg w={13} stroke="#666"><path d="M.5.5h12v12H.5zM.5 7.500h8M4.500.5v7M8.500.5v7" /></Svg>
        </IconButton>
        <IconButton name="Zoom out" className="ml-0.5 w-3"><span className="h-0.5 w-1.5 bg-[#555]" /></IconButton>
        <div className="relative ml-0.5 flex h-full w-[100px] items-center">
            <span className="absolute top-[10px] left-0 h-px w-full bg-[#a0a0a0]" />
            <span className="absolute top-2 left-[50px] h-[5px] w-px bg-[#a0a0a0]" />
            <input
                type="range"
                aria-label="Zoom"
                defaultValue="45"
                className="relative w-full appearance-none bg-transparent [&::-webkit-slider-thumb]:h-[11px] [&::-webkit-slider-thumb]:w-1 [&::-webkit-slider-thumb]:appearance-none [&::-webkit-slider-thumb]:bg-[#555]"
            />
        </div>
        <IconButton name="Zoom in" className="w-4">
            <Svg w={8} stroke="#555" strokeWidth="2"><path d="M4 0v8M0 4h8" /></Svg>
        </IconButton>
        <span className="w-10 pl-2.5">90%</span>
    </div>
);

/* ---------- taskbar ---------- */

const TaskButton = ({ name, active, children }) => (
    <button
        aria-label={name}
        className={clsx('flex h-[38px] w-[60px] items-center justify-center border outline-1 outline-[#2a5f96]', active ? 'border-white bg-[#7fa9d4]' : 'border-[#9dc0e2] bg-[#6699cc]')}
    >
        {children}
    </button>
);

const Office = ({ letter, color, children }) => (
    <Svg w={30} h={31}>
        <path d="M16 4.500h13v21H16z" fill="#fff" stroke={color} />
        {children}
        <path d="M0 3l18-3v31L0 27z" fill={color} />
        <text x="9" y="21" textAnchor="middle" fill="#fff" fontSize="15" fontWeight="700" fontFamily="Open Sans">{letter}</text>
    </Svg>
);

const Taskbar = () => (
    <footer className="relative flex h-10 shrink-0 items-center bg-linear-to-b from-[#4a8ecb] to-[#4080bd] text-xs text-white">
        <svg className="absolute inset-0 h-full w-full" fill="none" stroke="#3a83c5" strokeWidth="2" opacity=".7">
            <circle cx="470" cy="17" r="14" />
            <path d="M400 17h31v23M470 3V0M549 0v40M570 0v40M332 20l18-20M900 5h60v35M980 0v40M1146 0v40M1185 0v40M1217 0v40M1243 40V5h102l6-5" />
            <circle cx="1020" cy="26" r="14" />
            <path d="M1034 26h28v14M1106 0a14 14 0 0 0 28 0M1433 4V0" />
            <circle cx="1433" cy="18" r="14" />
            <path d="M1475 0v40M1514 40V17h73M1642 0v40M1690 17h14l16-17" />
            <circle cx="1676" cy="17" r="14" />
        </svg>
        <div className="relative flex flex-1 items-center gap-0.5">
            <button aria-label="Internet Explorer" className="mr-[15px] ml-[30px]">
                <Svg w={32} h={32}>
                    <path d="M25 21.500c-1.500 4-5 6-9 6-5 0-8.500-4-8.500-9.500S11 8.500 16 8.500c5.500 0 9 3.500 9 9.500H9" stroke="#6fd4fa" strokeWidth="4.500" />
                    <path d="M5 30c-6-2 0-14 8-21S27-1 28.500 3c.6 2-.5 4-1 5" stroke="#f5c518" strokeWidth="2.500" />
                </Svg>
            </button>
            <TaskButton name="File Explorer">
                <Svg w={32} h={31}>
                    <path d="M1 3h11l2 3h17v20H1z" fill="#f3e08d" stroke="#d9b84e" />
                    <path d="M4 1h6v3H4z" fill="#2ca84c" />
                    <path d="M12 3h5v3h-5z" fill="#d9472b" />
                    <path d="M20 5h8v3h-8z" fill="#3fa2dd" />
                    <path d="M3 8h27v18H3z" fill="#f8eaa6" />
                    <path d="M6 30V21q0-3 3-3h14q4 0 4 3v9h-4v-6H10v6z" fill="#9bd4f0" stroke="#5fa9cf" />
                </Svg>
            </TaskButton>
            <TaskButton name="Messages">
                <Svg w={32} h={30}>
                    <ellipse cx="16" cy="12" rx="15" ry="11.500" fill="#ededed" stroke="#cfcfcf" />
                    <path d="M12 22l5 7 1-7z" fill="#e2e2e2" />
                </Svg>
            </TaskButton>
            <TaskButton name="PowerPoint">
                <Office letter="P" color="#d24726">
                    <circle cx="23" cy="12" r="4" fill="#d24726" />
                    <path d="M23 12V7.500a4.500 4.500 0 0 1 4.500 4.500z" fill="#fff" />
                    <path d="M19 19.500h8M19 22.500h8" stroke="#d24726" />
                </Office>
            </TaskButton>
            <TaskButton name="Excel" active>
                <Office letter="X" color="#207245">
                    <path d="M19 8.500h8M19 12h8M19 15.500h8M19 19h8M19 22.500h8" stroke="#207245" strokeWidth="2" strokeDasharray="4 1" />
                </Office>
            </TaskButton>
        </div>
        <div className="relative flex items-center gap-2 pr-[17px]">
            <button aria-label="Show hidden icons" className="mr-2"><Caret className="rotate-180 text-white" /></button>
            <button aria-label="Volume">
                <Svg w={16} h={16}>
                    <path d="M1 5h3l4-4v14l-4-4H1z" fill="#fff" stroke="#24486e" strokeWidth=".6" />
                    <path d="M10 5q2 3 0 6M12 3q4 5 0 10" stroke="#fff" strokeWidth="1.300" />
                </Svg>
            </button>
            <button aria-label="Network">
                <Svg w={16} h={16}>
                    <path d="M5 2.500h9v8H5z" fill="#3b6a9c" stroke="#fff" strokeWidth="1.400" />
                    <path d="M1 1h4v4H1zM3 5v10h6" stroke="#fff" strokeWidth="1.400" />
                    <path d="M11 6l5 10H6z" fill="#ffc20e" />
                    <path d="M11 9v3.500M11 13.500v1.500" stroke="#222" />
                </Svg>
            </button>
            <button aria-label="Action center">
                <Svg w={17} h={16}>
                    <path d="M1.500 0v16" stroke="#fff" strokeWidth="1.600" />
                    <path d="M3 2h6l1 2h5v7H3z" fill="#fff" />
                    <circle cx="11.500" cy="11" r="4.800" fill="#d8322a" />
                    <path d="M9.500 9l4 4M13.500 9l-4 4" stroke="#fff" strokeWidth="1.500" />
                </Svg>
            </button>
            <button className="w-[67px] pt-0.5 text-center leading-[17px]">
                8:49 AM
                <br />
                8/2/2019
            </button>
        </div>
    </footer>
);

export default function App() {
    return (
        <div className="flex h-screen flex-col overflow-hidden bg-[#e6e6e6] font-['Open_Sans','Noto_Sans',sans-serif]">
            <header className="shrink-0 bg-[#217346]">
                <TitleBar />
                <TabBar />
            </header>
            <Ribbon />
            <FormulaBar />
            <main className="flex min-h-0 flex-1 pr-1">
                <div className="min-w-0 flex-1 overflow-hidden border-r border-[#999]">
                    <Sheet />
                </div>
                <VerticalScroll />
            </main>
            <SheetTabs />
            <StatusBar />
            <Taskbar />
        </div>
    );
}
